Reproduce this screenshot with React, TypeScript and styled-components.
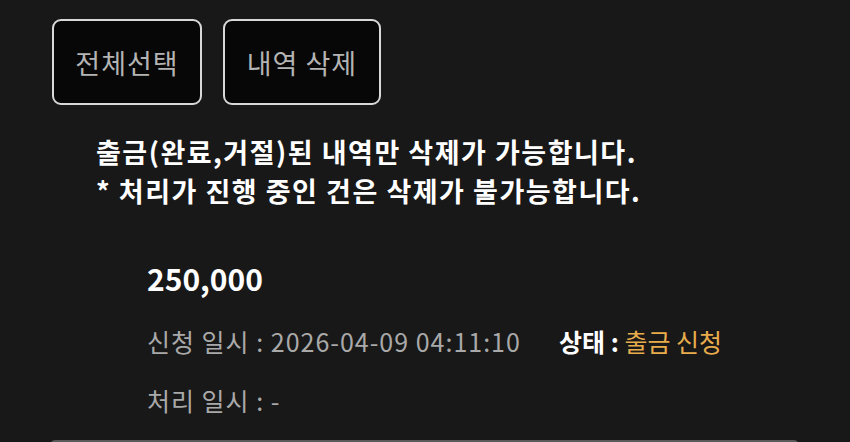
import React from 'react';
import styled, { createGlobalStyle } from 'styled-components';

const GlobalStyle = createGlobalStyle`
  html, body {
    margin: 0;
    padding: 0;
    background: #181818;
    overflow: hidden;
  }
  body {
    font-family: 'Noto Sans CJK KR', 'Noto Sans', sans-serif;
  }
`;

const Page = styled.div`
  width: 850px;
  height: 442px;
  overflow: hidden;
  background: #181818;
  box-sizing: border-box;
  padding: 19px 0 0 52px;
`;

const Toolbar = styled.div`
  display: flex;
  gap: 21px;
`;

const ActionButton = styled.button<{ width: number }>`
  width: ${(p) => p.width}px;
  height: 86px;
  padding: 0;
  background: #070707;
  border: 2px solid #d8d8d8;
  border-radius: 9px;
  color: #b4b4b4;
  font-family: inherit;
  font-size: 27px;
  letter-spacing: 1px;
  cursor: pointer;
`;

const Notice = styled.div`
  margin: 27px 0 0 44px;
  color: #ffffff;
  font-size: 27px;
  font-weight: 700;
  line-height: 39px;
  letter-spacing: 1.5px;
`;

const Card = styled.div`
  margin: 48px 0 0 95px;
  display: flex;
  flex-direction: column;
`;

const Amount = styled.div`
  color: #ffffff;
  font-size: 30px;
  font-weight: 700;
  line-height: 40px;
  margin-bottom: 13px;
`;

const InfoRow = styled.div`
  display: flex;
  align-items: center;
  height: 59px;
  font-size: 25px;
`;

const InfoText = styled.span`
  color: #a9a9a9;
  width: 412px;
  letter-spacing: 1px;
`;

const StatusLabel = styled.span`
  color: #ffffff;
  font-weight: 700;
`;

const StatusValue = styled.span`
  color: #e8ac4c;
`;

const NextCard = styled.div`
  margin: 11px 0 0 -1px;
  width: 747px;
  height: 40px;
  border-top: 2px solid #5a5a5a;
  border-radius: 4px 4px 0 0;
`;

export default function App() {
  return (
    <>
      <GlobalStyle />
      <Page>
        <Toolbar>
          <ActionButton width={150}>전체선택</ActionButton>
          <ActionButton width={158}>내역 삭제</ActionButton>
        </Toolbar>
        <Notice>
          출금(완료,거절)된 내역만 삭제가 가능합니다.
          <br />* 처리가 진행 중인 건은 삭제가 불가능합니다.
        </Notice>
        <Card>
          <Amount>250,000</Amount>
          <InfoRow>
            <InfoText>신청 일시 : 2026-04-09 04:11:10</InfoText>
            <StatusLabel>상태 :&nbsp;</StatusLabel>
            <StatusValue>출금 신청</StatusValue>
          </InfoRow>
          <InfoRow>
            <InfoText>처리 일시 : -</InfoText>
          </InfoRow>
        </Card>
        <NextCard />
      </Page>
    </>
  );
}
